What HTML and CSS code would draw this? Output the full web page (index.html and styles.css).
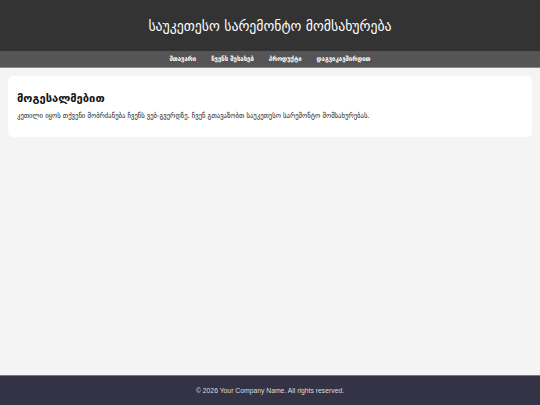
FILE: index.html
```html
<!DOCTYPE html>
<html lang="ka">
<head>
<meta charset="utf-8">
<title>საუკეთესო სარემონტო მომსახურება</title>
<link rel="stylesheet" href="styles.css">
</head>
<body>
<div class="page">
  <header class="site-header">
    <h1 class="site-title">საუკეთესო სარემონტო მომსახურება</h1>
  </header>
  <nav class="site-nav">
    <a href="#" class="nav-link">მთავარი</a>
    <a href="#" class="nav-link">ჩვენს შესახებ</a>
    <a href="#" class="nav-link">პროდუქტი</a>
    <a href="#" class="nav-link">დაგვიკავშირდით</a>
  </nav>
  <main class="content">
    <section class="card">
      <h2 class="card-title">მოგესალმებით</h2>
      <p class="card-text">კეთილი იყოს თქვენი მობრძანება ჩვენს ვებ-გვერდზე. ჩვენ გთავაზობთ საუკეთესო სარემონტო მომსახურებას.</p>
    </section>
  </main>
  <footer class="site-footer">
    <p class="footer-text">© 2026 Your Company Name. All rights reserved.</p>
  </footer>
</div>
</body>
</html>
```
FILE: styles.css
```css
* { box-sizing: border-box; }
html, body { margin: 0; padding: 0; }
body {
  font-family: "Liberation Sans", "DejaVu Sans", sans-serif;
  background: #f4f4f4;
  color: #111;
}
.page {
  min-height: 100vh;
  display: flex;
  flex-direction: column;
}
.site-header {
  background: #333;
  color: #fff;
  height: 51px;
  display: flex;
  align-items: center;
  justify-content: center;
}
.site-title {
  margin: 0;
  font-family: "DejaVu Sans Condensed", "DejaVu Sans", sans-serif;
  font-size: 15.3px;
  font-weight: normal;
}
.site-nav {
  background: #555;
  height: 17px;
  border-bottom: 1px solid #888;
  display: flex;
  justify-content: center;
  align-items: center;
  gap: 15px;
}
.nav-link {
  color: #fff;
  text-decoration: none;
  font-family: "DejaVu Sans Condensed", "DejaVu Sans", sans-serif;
  font-size: 6.7px;
  font-weight: bold;
}
.content {
  flex: 1;
  padding: 8px 8px;
}
.card {
  background: #fff;
  border-radius: 5px;
  padding: 16px 9px 10px;
  height: 61px;
}
.card-title {
  margin: 0 0 6px;
  font-family: "DejaVu Sans", sans-serif;
  font-size: 11.2px;
  font-weight: bold;
}
.card-text {
  margin: 0;
  font-family: "DejaVu Sans Condensed", "DejaVu Sans", sans-serif;
  font-size: 7.4px;
  color: #222;
}
.site-footer {
  background: #333345;
  border-top: 1px solid #777;
  height: 30px;
  display: flex;
  align-items: center;
  justify-content: center;
}
.footer-text {
  margin: 0;
  color: #ddd;
  font-size: 6.8px;
}
```
